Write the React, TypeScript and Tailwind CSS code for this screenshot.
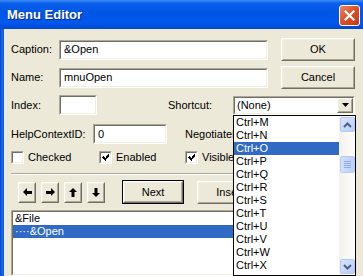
import React from "react";

const ui = "font-['Liberation_Sans',Arial,sans-serif] text-[11px] text-black";

function Sunken({ className = "", children }: { className?: string; children?: React.ReactNode }) {
  return (
    <div className={`border border-t-[#ACA899] border-l-[#ACA899] border-r-white border-b-white ${className}`}>
      <div className="w-full h-full border border-t-[#716F64] border-l-[#716F64] border-r-[#F1EFE2] border-b-[#F1EFE2] bg-white flex items-center overflow-hidden">
        {children}
      </div>
    </div>
  );
}

function Raised({ className = "", children, isDefault = false }: { className?: string; children?: React.ReactNode; isDefault?: boolean }) {
  const inner = (
    <div className="w-full h-full border border-t-white border-l-white border-r-[#716F64] border-b-[#716F64]">
      <div className="w-full h-full border border-t-[#F1EFE2] border-l-[#F1EFE2] border-r-[#ACA899] border-b-[#ACA899] bg-[#ECE9D8] flex items-center justify-center">
        {children}
      </div>
    </div>
  );
  if (isDefault) return <div className={`border border-black ${className}`}>{inner}</div>;
  return <div className={className}>{inner}</div>;
}

function Check({ checked, label, className = "" }: { checked: boolean; label: string; className?: string }) {
  return (
    <div className={`flex items-center ${className}`}>
      <Sunken className="w-[13px] h-[13px] shrink-0">
        {checked && (
          <svg width="9" height="9" viewBox="0 0 9 9" className="ml-[1px]" shapeRendering="crispEdges">
            <path d="M1 3h1v1h1v1h1v-1h1v-1h1v-1h1v-1h1v3h-1v1h-1v1h-1v1h-1v1h-1v-1h-1v-1h-1v-1h-1z" fill="#000" />
          </svg>
        )}
      </Sunken>
      <span className="ml-[4px] leading-[13px]">{label}</span>
    </div>
  );
}

function Arrow({ dir }: { dir: "l" | "r" | "u" | "d" }) {
  const paths = {
    l: "M0 4 L4 0 V3 H9 V6 H4 V8 Z",
    r: "M9 4 L5 0 V3 H0 V6 H5 V8 Z",
    u: "M4 0 L8 4 H5.5 V9 H2.5 V4 H0 Z",
    d: "M4 9 L8 5 H5.5 V0 H2.5 V5 H0 Z",
  };
  const horiz = dir === "l" || dir === "r";
  return (
    <svg width={horiz ? 9 : 8} height={horiz ? 8 : 9} viewBox={horiz ? "0 0 9 8" : "0 0 8 9"}>
      <path d={paths[dir]} fill="#000" />
    </svg>
  );
}

function ScrollBtn({ up }: { up: boolean }) {
  return (
    <div className="w-[15px] h-[15px] rounded-[2px] border border-[#B7CAF5] bg-[linear-gradient(135deg,#D8E4FD,#B9CDFB)] flex items-center justify-center">
      <svg width="9" height="6" viewBox="0 0 9 6">
        <path d={up ? "M1 5 L4.5 1.5 L8 5" : "M1 1 L4.5 4.5 L8 1"} stroke="#4D6185" strokeWidth="2" fill="none" />
      </svg>
    </div>
  );
}

const shortcuts = ["Ctrl+M", "Ctrl+N", "Ctrl+O", "Ctrl+P", "Ctrl+Q", "Ctrl+R", "Ctrl+S", "Ctrl+T", "Ctrl+U", "Ctrl+V", "Ctrl+W", "Ctrl+X"];

export default function App() {
  return (
    <div className={`w-[363px] h-[276px] overflow-hidden flex flex-col ${ui}`}>
      {/* title bar */}
      <div className="h-[29px] shrink-0 flex items-start bg-[linear-gradient(to_bottom,#3A8CF6_0%,#0A5EEA_12%,#0055E5_45%,#0158EC_80%,#0146CF_100%)]">
        <span className="ml-[7px] mt-[7px] leading-[16px] text-[13px] font-bold text-white font-['Liberation_Sans',Arial,sans-serif] [text-shadow:1px_1px_0_#0B2A8F]">
          Menu Editor
        </span>
        <div className="ml-auto mr-[3px] mt-[5px] w-[21px] h-[21px] rounded-[3px] border border-white bg-[linear-gradient(135deg,#EE8463,#DA4A22_55%,#C33A14)] flex items-center justify-center">
          <svg width="11" height="11" viewBox="0 0 11 11">
            <path d="M1.5 1.5 L9.5 9.5 M9.5 1.5 L1.5 9.5" stroke="#fff" strokeWidth="2.2" strokeLinecap="square" />
          </svg>
        </div>
      </div>

      <div className="flex flex-1 min-h-0">
        <div className="w-[4px] shrink-0 bg-[linear-gradient(to_right,#0841C8,#166AEE_50%,#0A5BE8)]" />
        <div className="relative flex-1 bg-[#ECE9D8] pl-[7px] flex flex-col">
          {/* Caption */}
          <div className="mt-[9px] h-[23px] flex items-center">
            <span className="w-[48px]">Caption:</span>
            <Sunken className="w-[209px] h-[20px]">
              <span className="pl-[3px]">&amp;Open</span>
            </Sunken>
            <Raised className="ml-[13px] w-[74px] h-[23px]">OK</Raised>
          </div>
          {/* Name */}
          <div className="mt-[5px] h-[23px] flex items-center">
            <span className="w-[48px]">Name:</span>
            <Sunken className="w-[209px] h-[20px]">
              <span className="pl-[3px]">mnuOpen</span>
            </Sunken>
            <Raised className="ml-[13px] w-[74px] h-[23px]">Cancel</Raised>
          </div>
          {/* Index / Shortcut */}
          <div className="mt-[6px] h-[20px] flex items-center">
            <span className="w-[48px]">Index:</span>
            <Sunken className="w-[38px] h-[20px]" />
            <span className="ml-[71px] w-[65px]">Shortcut:</span>
            <Sunken className="w-[122px] h-[19px]">
              <span className="pl-[2px] flex-1">(None)</span>
              <Raised className="w-[16px] h-[15px] mr-[0px]">
                <svg width="7" height="4" viewBox="0 0 7 4">
                  <path d="M0 0 H7 L3.5 4 Z" fill="#000" />
                </svg>
              </Raised>
            </Sunken>
          </div>
          {/* HelpContextID */}
          <div className="mt-[9px] h-[20px] flex items-center">
            <span className="w-[82px]">HelpContextID:</span>
            <Sunken className="w-[74px] h-[20px]">
              <span className="pl-[3px]">0</span>
            </Sunken>
            <span className="ml-[18px] whitespace-nowrap">NegotiatePosition:</span>
          </div>
          {/* checkboxes */}
          <div className="mt-[7px] h-[13px] flex items-center">
            <Check checked={false} label="Checked" className="w-[88px]" />
            <Check checked={true} label="Enabled" className="w-[86px]" />
            <Check checked={true} label="Visible" />
          </div>
          {/* separator */}
          <div className="mt-[9px] mr-[8px] h-[2px] border-t border-t-[#ACA899] border-b border-b-white" />
          {/* arrows + buttons */}
          <div className="mt-[5px] h-[24px] flex items-center">
            <div className="ml-[7px] flex gap-[5px]">
              <Raised className="w-[18px] h-[21px]"><Arrow dir="l" /></Raised>
              <Raised className="w-[18px] h-[21px]"><Arrow dir="r" /></Raised>
              <Raised className="w-[18px] h-[21px]"><Arrow dir="u" /></Raised>
              <Raised className="w-[18px] h-[21px]"><Arrow dir="d" /></Raised>
            </div>
            <Raised isDefault className="ml-[17px] w-[62px] h-[24px]">Next</Raised>
            <Raised className="ml-[13px] w-[66px] h-[23px]">Insert</Raised>
            <Raised className="ml-[12px] w-[66px] h-[23px]">Delete</Raised>
          </div>
          {/* menu list */}
          <Sunken className="mt-[6px] w-[344px] flex-1 !items-start">
            <div className="self-start w-full pt-[0px]">
              <div className="h-[13px] leading-[13px] pl-[2px]">&amp;File</div>
              <div className="h-[13px] leading-[13px] pl-[2px] bg-[#316AC5] text-white">····&amp;Open</div>
            </div>
          </Sunken>

          {/* open shortcut dropdown */}
          <div className="absolute left-[229px] top-[86px] w-[123px] h-[161px] border border-black bg-white flex">
            <div className="flex-1 flex flex-col">
              {shortcuts.map((s) => (
                <div
                  key={s}
                  className={`h-[13px] leading-[13px] pl-[2px] ${s === "Ctrl+O" ? "bg-[#316AC5] text-white" : ""}`}
                >
                  {s}
                </div>
              ))}
            </div>
            <div className="w-[16px] flex flex-col items-center bg-[linear-gradient(to_right,#F3F1EC,#FEFEFB)]">
              <div className="mt-[1px]">
                <ScrollBtn up />
              </div>
              <div className="mt-[24px] w-[15px] h-[17px] rounded-[2px] border border-[#B7CAF5] bg-[linear-gradient(to_right,#D2DFFD,#BCD0FB)] flex flex-col items-center justify-center gap-[1px]">
                <div className="w-[7px] h-[1px] bg-[#8DAEF3]" />
                <div className="w-[7px] h-[1px] bg-[#8DAEF3]" />
                <div className="w-[7px] h-[1px] bg-[#8DAEF3]" />
                <div className="w-[7px] h-[1px] bg-[#8DAEF3]" />
              </div>
              <div className="mt-auto mb-[1px]">
                <ScrollBtn up={false} />
              </div>
            </div>
          </div>
        </div>
      </div>
    </div>
  );
}
